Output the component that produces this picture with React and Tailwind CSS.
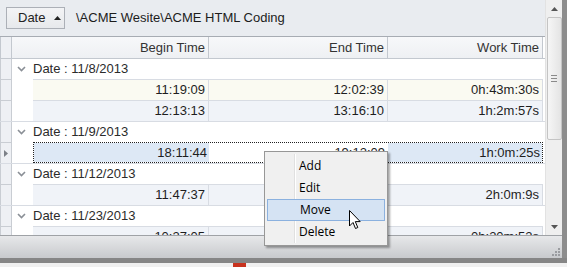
import React from "react";

const groups = [
  {
    date: "11/8/2013",
    rows: [
      { begin: "11:19:09", end: "12:02:39", work: "0h:43m:30s", bg: "bg-[#fafaf2]" },
      { begin: "12:13:13", end: "13:16:10", work: "1h:2m:57s", bg: "bg-[#f0f3f8]" },
    ],
  },
  {
    date: "11/9/2013",
    rows: [{ begin: "18:11:44", end: "19:12:09", work: "1h:0m:25s", selected: true }],
  },
  {
    date: "11/12/2013",
    rows: [{ begin: "11:47:37", end: "13:47:46", work: "2h:0m:9s", bg: "bg-[#f0f3f8]" }],
  },
  {
    date: "11/23/2013",
    rows: [{ begin: "10:27:05", end: "10:48:57", work: "0h:20m:52s", bg: "bg-[#f0f3f8]" }],
  },
];

const Chevron = () => (
  <svg width="9" height="6" viewBox="0 0 9 6" className="shrink-0">
    <path d="M1 1 L4.5 4.5 L8 1" fill="none" stroke="#8a8f96" strokeWidth="1.6" />
  </svg>
);

const DataRow = ({ row }) => {
  const cell = "h-full flex items-center justify-end pr-[3px] border-r border-[#d8dce3]";
  return (
    <div className="flex h-[21px]">
      <div className="w-[12px] shrink-0 border-l border-r border-t border-[#c9cdd3] bg-[#eef0f4] flex items-center justify-center">
        {row.selected && (
          <svg width="4" height="7" viewBox="0 0 4 7">
            <path d="M0 0 L4 3.5 L0 7 Z" fill="#7c8087" />
          </svg>
        )}
      </div>
      <div className="w-[21px] shrink-0 bg-white" />
      {row.selected ? (
        <div className="flex h-full border border-dotted border-[#222] bg-white">
          <div className="w-[175px] h-full flex items-center justify-end pr-[2px] bg-[#dde8f5]">{row.begin}</div>
          <div className="w-[179px] h-full flex items-center justify-end pr-[3px] bg-white">{row.end}</div>
          <div className="w-[154px] h-full flex items-center justify-end pr-[2px] bg-[#dde8f5]">{row.work}</div>
        </div>
      ) : (
        <div className={`flex h-full border-t border-[#d8dce3] ${row.bg}`}>
          <div className={`w-[176px] ${cell}`}>{row.begin}</div>
          <div className={`w-[179px] ${cell}`}>{row.end}</div>
          <div className={`w-[155px] ${cell}`}>{row.work}</div>
        </div>
      )}
    </div>
  );
};

const Group = ({ group }) => (
  <div className="border-b border-[#d8dce3]">
    <div className="flex h-[20px]">
      <div className="w-[12px] shrink-0 border-l border-r border-[#c9cdd3] bg-[#eef0f4]" />
      <div className="flex items-center pl-[5px] gap-[7px] text-[#2b2b2b]">
        <Chevron />
        <span>Date : {group.date}</span>
      </div>
    </div>
    {group.rows.map((r, i) => (
      <DataRow key={i} row={r} />
    ))}
  </div>
);

const ContextMenu = () => (
  <div className="absolute left-[264px] top-[151px] w-[124px] h-[95px] bg-[#f0f0f0] border border-[#979797] shadow-[2px_2px_2px_rgba(0,0,0,0.35)] pt-[3px] px-[2px] font-['Open_Sans',sans-serif] text-[12px] text-black">
    <div className="absolute left-[29px] top-[2px] bottom-[2px] w-[2px] border-l border-[#e0e0e0] border-r border-r-white" />
    {["Add", "Edit", "Move", "Delete"].map((item) => (
      <div
        key={item}
        className={`relative h-[22px] flex items-center pl-[32px] ${
          item === "Move" ? "bg-[#d5e3f3] border border-[#8bb1df] pl-[31px]" : ""
        }`}
      >
        {item}
      </div>
    ))}
  </div>
);

const Cursor = () => (
  <svg className="absolute left-[349px] top-[210px]" width="13" height="20" viewBox="0 0 13 20">
    <path
      d="M0.5 0.5 L0.5 16 L4 12.5 L6.5 18.5 L8.8 17.5 L6.3 11.6 L11.2 11.6 Z"
      fill="white"
      stroke="black"
      strokeWidth="1"
      strokeLinejoin="round"
    />
  </svg>
);

const Scrollbar = () => (
  <div className="w-[17px] h-full bg-[#efefef] border-l border-[#e2e2e2] flex flex-col items-center">
    <div className="h-[17px] flex items-center justify-center">
      <svg width="7" height="4" viewBox="0 0 7 4">
        <path d="M0 4 L3.5 0 L7 4 Z" fill="#555" />
      </svg>
    </div>
    <div className="w-[15px] h-[123px] rounded-[2px] border border-[#c4c4c4] bg-gradient-to-r from-[#f6f6f6] to-[#e4e4e4] flex flex-col items-center justify-center gap-[2px]">
      <div className="w-[6px] h-px bg-[#8a8a8a]" />
      <div className="w-[6px] h-px bg-[#8a8a8a]" />
      <div className="w-[6px] h-px bg-[#8a8a8a]" />
    </div>
    <div className="flex-1" />
    <div className="h-[17px] flex items-center justify-center">
      <svg width="7" height="4" viewBox="0 0 7 4">
        <path d="M0 0 L3.5 4 L7 0 Z" fill="#555" />
      </svg>
    </div>
  </div>
);

export default function App() {
  return (
    <div className="relative w-[567px] h-[267px] overflow-hidden bg-[#f0f0f0] font-['Liberation_Sans',Arial,sans-serif] text-[13px] text-[#1e1e1e]">
      <div className="flex h-[258px]">
        <div className="w-[562px] flex flex-col">
          <div className="flex h-[235px]">
            <div className="w-[545px] flex flex-col bg-white">
              {/* group panel */}
              <div className="h-[37px] shrink-0 bg-[#e9ecf0] border-b border-[#a7acb3] flex items-center pl-[6px] pb-[1px]">
                <div className="w-[59px] h-[22px] border border-[#acb0b7] bg-gradient-to-b from-[#f3f4f6] to-[#e7e9ec] flex items-center pl-[11px] gap-[9px] text-[#222]">
                  <span>Date</span>
                  <svg width="7" height="4" viewBox="0 0 7 4">
                    <path d="M0 4 L3.5 0 L7 4 Z" fill="#222" />
                  </svg>
                </div>
                <span className="ml-[11px] text-[#1c1c1c]">\ACME Wesite\ACME HTML Coding</span>
              </div>
              {/* header */}
              <div className="flex h-[22px] shrink-0 border-b border-[#c3c8cf]">
                <div className="w-[12px] border-l border-r border-[#c3c8cf] bg-[#eef0f4]" />
                <div className="w-[197px] border-r border-[#c3c8cf] bg-gradient-to-b from-[#f7f8fa] to-[#eef0f3] flex items-center justify-end pr-[3px] text-[#333]">Begin Time</div>
                <div className="w-[179px] border-r border-[#c3c8cf] bg-gradient-to-b from-[#f7f8fa] to-[#eef0f3] flex items-center justify-end pr-[3px] text-[#333]">End Time</div>
                <div className="w-[155px] border-r border-[#c3c8cf] bg-gradient-to-b from-[#f7f8fa] to-[#eef0f3] flex items-center justify-end pr-[3px] text-[#333]">Work Time</div>
              </div>
              {/* rows */}
              <div className="flex-1 overflow-hidden">
                {groups.map((g) => (
                  <Group key={g.date} group={g} />
                ))}
              </div>
            </div>
            <Scrollbar />
          </div>
          {/* footer */}
          <div className="h-[23px] border-t border-[#9fa2a6] bg-gradient-to-b from-[#e7e8ea] to-[#c8cacd] flex items-end justify-end pr-[2px] pb-[2px]">
            <svg width="8" height="8" viewBox="0 0 8 8">
              <rect x="6" y="0" width="2" height="2" fill="#9a9ca0" />
              <rect x="3" y="3" width="2" height="2" fill="#9a9ca0" />
              <rect x="6" y="3" width="2" height="2" fill="#9a9ca0" />
              <rect x="0" y="6" width="2" height="2" fill="#9a9ca0" />
              <rect x="3" y="6" width="2" height="2" fill="#9a9ca0" />
              <rect x="6" y="6" width="2" height="2" fill="#9a9ca0" />
            </svg>
          </div>
        </div>
        <div className="w-[5px] bg-[#8d8d8d]" />
      </div>
      <div className="h-[5px] bg-[#868686]" />
      <div className="flex h-[4px]">
        <div className="ml-[233px] w-[13px] bg-[#c8321e]" />
      </div>
      <ContextMenu />
      <Cursor />
    </div>
  );
}
